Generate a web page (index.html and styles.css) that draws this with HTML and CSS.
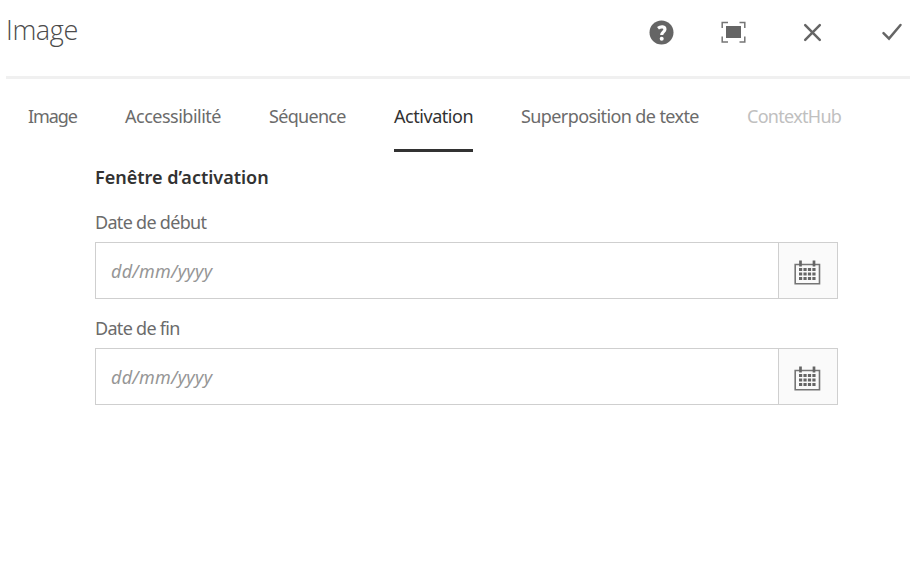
FILE: index.html
```html
<!DOCTYPE html>
<html lang="fr">
<head>
<meta charset="utf-8">
<title>Image</title>
<link rel="stylesheet" href="styles.css">
</head>
<body>
<header class="header">
  <h1 class="title"><span>Image</span></h1>
  <div class="actions">
    <button class="action" aria-label="Aide"><svg width="26" height="27" viewBox="0 0 26 27"><circle cx="12.500" cy="13.500" r="12" fill="#656565"/><path d="M9 9.200C12 7 16 7.400 15.900 10.500C15.800 12.800 12.700 13 12.700 16" fill="none" stroke="#fff" stroke-width="3.200"/><circle cx="12.700" cy="19.800" r="2" fill="#fff"/></svg></button>
    <button class="action" aria-label="Plein écran"><svg width="26" height="27" viewBox="0 0 26 27"><path d="M1.200 9V3.500H7M18.500 3.500h5.300V9M23.800 17.500v5.500H18.500M7 23H1.200v-5.500" fill="none" stroke="#757575" stroke-width="1.500"/><path d="M5 7h15v12H5z" fill="#656565"/></svg></button>
    <button class="action" aria-label="Fermer"><svg width="26" height="27" viewBox="0 0 26 27"><path d="M5.200 6.200l14.600 14.600M19.800 6.200L5.200 20.800" fill="none" stroke="#656565" stroke-width="2.500" stroke-linecap="round"/></svg></button>
    <button class="action" aria-label="Terminé"><svg width="26" height="27" viewBox="0 0 26 27"><path d="M4.500 14.200l5.500 5.400L21.500 6" fill="none" stroke="#656565" stroke-width="2.500" stroke-linecap="round"/></svg></button>
  </div>
</header>
<nav class="tabs">
  <a class="tab tab-image">Image</a>
  <a class="tab tab-access">Accessibilité</a>
  <a class="tab tab-sequence">Séquence</a>
  <a class="tab tab-activation selected">Activation</a>
  <a class="tab tab-overlay">Superposition de texte</a>
  <a class="tab tab-hub disabled">ContextHub</a>
</nav>
<main class="panel">
  <h2 class="heading"><span>Fenêtre d’activation</span></h2>
  <div class="label label-start"><span>Date de début</span></div>
  <div class="field">
    <div class="value"><span>dd/mm/yyyy</span></div>
    <button class="picker" aria-label="Calendrier"><svg width="28" height="28" viewBox="0 0 28 28"><path d="M1.200 7.500h24.300v19.300H1.200z" fill="none" stroke="#757575" stroke-width="1.600"/><path d="M6.500 3.500v6M20 3.500v6" stroke="#656565" stroke-width="2.700"/><path d="M5 12.500h16.600M5 17h16.600M5 21.500h16.600" stroke="#656565" stroke-width="3" stroke-dasharray="3.200 1.250"/></svg></button>
  </div>
  <div class="label label-end"><span>Date de fin</span></div>
  <div class="field">
    <div class="value"><span>dd/mm/yyyy</span></div>
    <button class="picker" aria-label="Calendrier"><svg width="28" height="28" viewBox="0 0 28 28"><path d="M1.200 7.500h24.300v19.300H1.200z" fill="none" stroke="#757575" stroke-width="1.600"/><path d="M6.500 3.500v6M20 3.500v6" stroke="#656565" stroke-width="2.700"/><path d="M5 12.500h16.600M5 17h16.600M5 21.500h16.600" stroke="#656565" stroke-width="3" stroke-dasharray="3.200 1.250"/></svg></button>
  </div>
</main>
</body>
</html>
```
FILE: styles.css
```css
* { box-sizing: border-box; }
body {
  margin: 0;
  background: #fff;
  color: #6b6b6b;
  font: 18px/24px "Noto Sans", "Open Sans", sans-serif;
  overflow: hidden;
}
button { border: 0; padding: 0; background: none; }
svg { display: block; }
.header {
  display: flex;
  justify-content: space-between;
  height: 79px;
  margin-left: 6px;
  border-bottom: 3px solid #f0f0f0;
}
.title {
  margin: 10px 0 0;
  font: 300 27px/40px "Open Sans", sans-serif;
  letter-spacing: -0.400px;
  color: #4b4b4b;
}
.actions {
  display: flex;
  flex: none;
  gap: 50px;
  margin: 19px 5px 0 0;
}
.action { width: 26px; height: 27px; }
.action:nth-child(2) { margin-left: -4px; }
.action:nth-child(3) { margin-left: 3px; }
.action:nth-child(4) { margin-left: 3px; }
.tabs {
  display: flex;
  gap: 48px;
  height: 73px;
  padding-left: 28px;
}
.tab {
  padding-top: 25px;
  white-space: nowrap;
  border-bottom: 3px solid transparent;
}
.tab-image { width: 49px; letter-spacing: -1.100px; }
.tab-access { width: 96px; letter-spacing: -0.500px; }
.tab-sequence { width: 77px; letter-spacing: -0.700px; }
.tab-activation { width: 79px; letter-spacing: -0.450px; }
.tab-overlay { width: 178px; letter-spacing: -0.600px; }
.tab-hub { width: 95px; letter-spacing: -0.700px; }
.selected { color: #323232; border-color: #323232; }
.disabled { color: #c0c0c0; }
.panel { width: 743px; margin-left: 95px; }
.heading {
  margin: 0;
  padding-top: 13px;
  font-size: 18px;
  font-weight: 600;
  line-height: 24px;
  color: #323232;
}
.label { letter-spacing: -0.700px; }
.label-start { padding: 21px 0 8px; }
.label-end { padding: 17px 0 8px; }
.field {
  display: flex;
  height: 57px;
  border: 1px solid #cfcfcf;
}
.value {
  flex: 1;
  padding: 16px 15px;
  font-style: italic;
  letter-spacing: 0.250px;
  color: #969696;
}
.picker {
  display: flex;
  align-items: flex-start;
  justify-content: center;
  width: 59px;
  padding-top: 14px;
  border-left: 1px solid #cfcfcf;
  background: #fafafa;
}
```
